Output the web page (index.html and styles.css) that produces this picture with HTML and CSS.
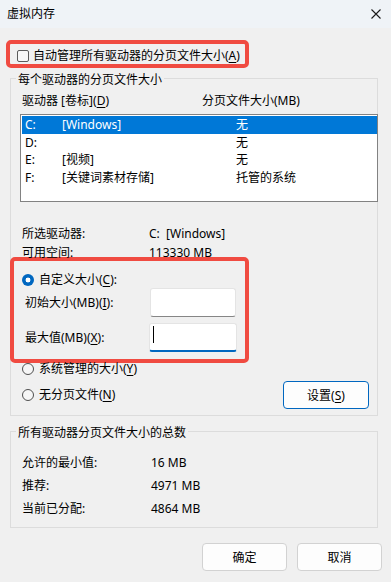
FILE: index.html
```html
<!DOCTYPE html>
<html lang="zh-CN">
<head>
    <meta charset="UTF-8">
    <meta name="viewport" content="width=device-width, initial-scale=1.0">
    <title>虚拟内存</title>
    <link rel="stylesheet" href="styles.css">
</head>
<body>
    <div class="titlebar">
        <span class="title">虚拟内存</span>
        <svg class="close" width="10" height="10" viewBox="0 0 10 10">
            <path d="M0.5 0.5 L9.5 9.5 M9.5 0.5 L0.5 9.5" stroke="#1a1a1a" stroke-width="1.1" fill="none"/>
        </svg>
    </div>

    <div class="mark auto-mark">
        <span class="checkbox"></span>
        <span>自动管理所有驱动器的分页文件大小(<u>A</u>)</span>
    </div>

    <fieldset class="group group-drive">
        <legend>每个驱动器的分页文件大小</legend>
        <div class="list-head">
            <span>驱动器 [卷标](<u>D</u>)</span>
            <span>分页文件大小(MB)</span>
        </div>
        <div class="listbox">
            <div class="row selected"><span>C:</span><span>[Windows]</span><span>无</span></div>
            <div class="row"><span>D:</span><span></span><span>无</span></div>
            <div class="row"><span>E:</span><span>[视频]</span><span>无</span></div>
            <div class="row"><span>F:</span><span>[关键词素材存储]</span><span>托管的系统</span></div>
        </div>

        <div class="info">
            <span>所选驱动器:</span><span>C:&nbsp;&nbsp;[Windows]</span>
            <span>可用空间:</span><span>113330 MB</span>
        </div>

        <div class="mark custom-mark">
            <div class="radio-line">
                <span class="radio checked"></span>
                <span>自定义大小(<u>C</u>):</span>
            </div>
            <div class="size-grid">
                <span>初始大小(MB)(<u>I</u>):</span>
                <div class="field"></div>
                <span>最大值(MB)(<u>X</u>):</span>
                <div class="field focused"><span class="caret"></span></div>
            </div>
        </div>

        <div class="radio-line system-line">
            <span class="radio"></span>
            <span>系统管理的大小(<u>Y</u>)</span>
        </div>
        <div class="none-line">
            <div class="radio-line">
                <span class="radio"></span>
                <span>无分页文件(<u>N</u>)</span>
            </div>
            <button class="btn btn-default">设置(<u>S</u>)</button>
        </div>
    </fieldset>

    <fieldset class="group group-total">
        <legend>所有驱动器分页文件大小的总数</legend>
        <div class="totals">
            <span>允许的最小值:</span><span>16 MB</span>
            <span>推荐:</span><span>4971 MB</span>
            <span>当前已分配:</span><span>4864 MB</span>
        </div>
    </fieldset>

    <div class="actions">
        <button class="btn">确定</button>
        <button class="btn">取消</button>
    </div>
</body>
</html>
```

FILE: styles.css
```css
* {
    box-sizing: border-box;
}

body {
    margin: 0;
    width: 391px;
    height: 582px;
    overflow: hidden;
    background: #f0f0f0;
    color: #000;
    font-family: "Noto Sans", "Noto Sans CJK SC", sans-serif;
    font-size: 12px;
    line-height: 16px;
}

u {
    text-underline-offset: 2px;
}

.titlebar {
    height: 28px;
    background: #eff3f7;
    display: flex;
    justify-content: space-between;
    align-items: center;
    padding: 0 10px 0 7px;
}

.mark {
    border: 4px solid #f04b41;
    border-radius: 5px;
}

.auto-mark {
    margin: 12px 0 0 6px;
    width: 243px;
    height: 28px;
    padding: 4px 0 0 7px;
    display: flex;
    align-items: center;
    gap: 4px;
}

.checkbox {
    width: 12px;
    height: 12px;
    border: 1px solid #5b5b5b;
    border-radius: 2px;
    background: #f7f7f7;
}

.group {
    margin: 0 0 0 10px;
    width: 368px;
    min-width: 0;
    padding: 0;
    border: 1px solid #dcdcdc;
}

.group legend {
    margin-left: 5px;
    padding: 4px 2px 0;
    line-height: 16px;
}

.list-head {
    margin: 5px 0 0 11px;
    display: grid;
    grid-template-columns: 180px auto;
}

.listbox {
    margin: 5px 0 0 9px;
    width: 358px;
    height: 88px;
    background: #fff;
    border: 1px solid #828282;
    padding: 1px 0 0 1px;
    font-size: 12px;
}

.row {
    height: 17.5px;
    line-height: 17.5px;
    padding-left: 3px;
    display: grid;
    grid-template-columns: 37px 174px auto;
}

.row.selected {
    background: #0078d7;
    color: #fff;
}

.info {
    margin: 22px 0 0 11px;
    display: grid;
    grid-template-columns: 127px auto;
    line-height: 19px;
}

.custom-mark {
    margin: -5px 0 0 -1px;
    width: 239px;
    padding: 11px 0 7px 8px;
}

.radio-line {
    display: flex;
    align-items: center;
    gap: 5px;
}

.radio {
    width: 12px;
    height: 12px;
    border-radius: 50%;
    border: 1px solid #4f4f4f;
    background: #f6f6f6;
}

.radio.checked {
    border: none;
    background: radial-gradient(circle, #fff 0 2.2px, #0067c0 2.7px);
}

.size-grid {
    padding-left: 3px;
    display: grid;
    grid-template-columns: 125px 86px;
    row-gap: 6px;
    align-items: center;
}

.field {
    height: 29px;
    background: #fff;
    border: 1px solid #e4e4e4;
    border-bottom: 1px solid #868686;
    border-radius: 3px;
}

.field.focused {
    margin-left: -1px;
    width: 88px;
    border-bottom: 2px solid #0067c0;
    padding: 2px 0 0 3px;
}

.caret {
    display: block;
    width: 1px;
    height: 17px;
    background: #000;
}

.system-line {
    margin: -2px 0 0 11px;
}

.none-line {
    margin: 4px 8px 6px 11px;
    display: flex;
    justify-content: space-between;
    align-items: center;
}

.btn {
    width: 85px;
    height: 28px;
    padding: 0;
    background: #fdfdfd;
    border: 1px solid #d2d2d2;
    border-radius: 4px;
    font-family: inherit;
    font-size: 12px;
    color: #000;
}

.btn-default {
    border-color: #0067c0;
    width: 86px;
}

.group-total {
    margin-top: 5px;
}

.totals {
    margin: 10px 0 7px 11px;
    display: grid;
    grid-template-columns: 129px auto;
    line-height: 23px;
}

.actions {
    margin: 15px 9px 0 0;
    display: flex;
    justify-content: flex-end;
    gap: 10px;
}
```
